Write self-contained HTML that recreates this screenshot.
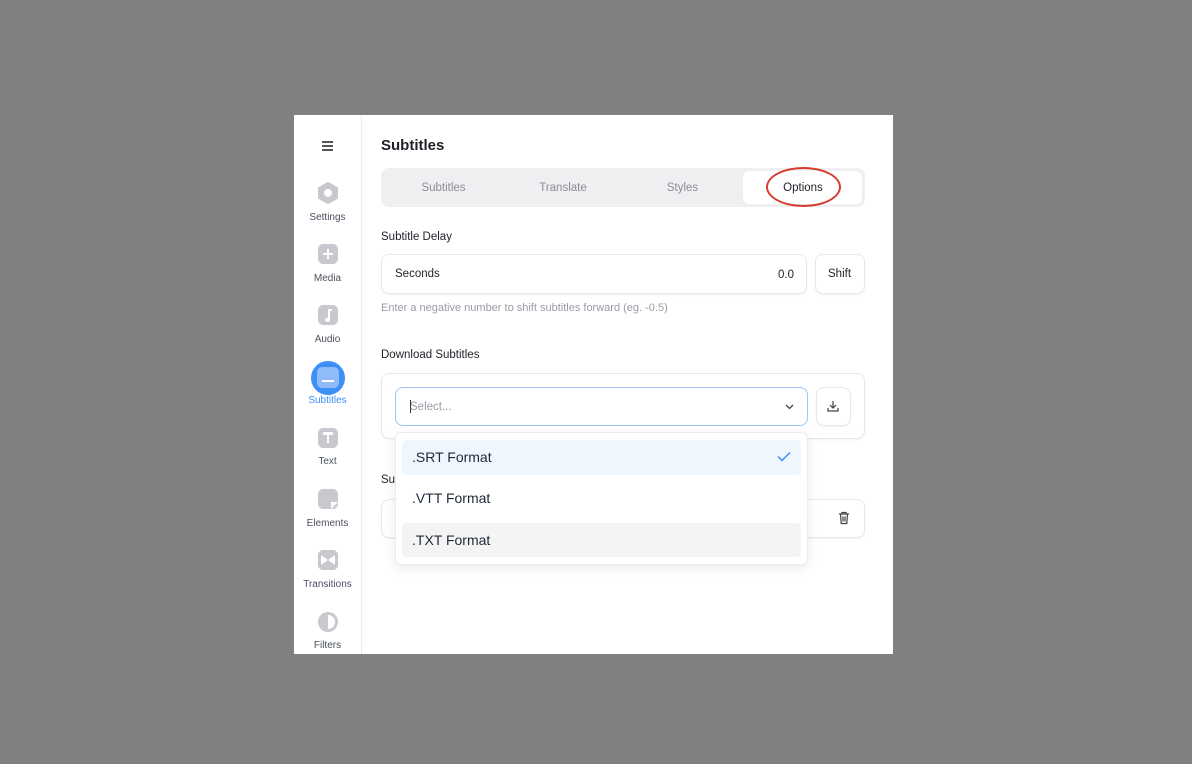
<!DOCTYPE html>
<html><head><meta charset="utf-8"><style>
*{box-sizing:border-box;margin:0;padding:0}
body{width:1192px;height:764px;background:#808080;font-family:"Liberation Sans",sans-serif;position:relative;overflow:hidden}
.panel{position:absolute;left:294px;top:115px;width:599px;height:539px;background:#fff;overflow:hidden}
.side{position:absolute;left:0;top:0;width:68px;height:539px;border-right:1px solid #ececee}
.it{position:absolute;left:0;width:67px;text-align:center;font-size:10px;color:#4b5060}
.ic{position:absolute;left:24px;width:20px;height:20px;border-radius:5px;background:#c8c9ce}
.a{position:absolute}
.lbl{font-size:11.5px;color:#1f2128}
.box{border:1px solid #e6e7ea;border-radius:8px;background:#fff;box-shadow:0 1px 2px rgba(0,0,0,.05)}
</style></head><body>
<div class="panel">
<div class="side">
 <div class="a" style="left:28px;top:26px;width:11px;height:1.5px;background:#555;box-shadow:0 4px 0 #555,0 8px 0 #555"></div>
 <svg class="a" style="left:23px;top:67px" width="22" height="22" viewBox="0 0 22 22"><polygon points="11,1 20,6 20,16 11,21 2,16 2,6" fill="#c8c9ce" stroke="#c8c9ce" stroke-linejoin="round" stroke-width="2"/><circle cx="11" cy="11" r="4" fill="#fff"/></svg>
 <div class="it" style="top:97px">Settings</div>
 <div class="ic" style="top:129px"></div><div class="a" style="left:29px;top:138px;width:10px;height:2px;background:#fff"></div><div class="a" style="left:33px;top:134px;width:2px;height:10px;background:#fff"></div>
 <div class="it" style="top:158px">Media</div>
 <div class="ic" style="top:190px"></div><div class="a" style="left:31px;top:203px;width:5px;height:4px;border-radius:50%;background:#fff"></div><div class="a" style="left:34px;top:194px;width:2px;height:11px;background:#fff"></div><div class="a" style="left:34px;top:194px;width:4px;height:2px;background:#fff"></div>
 <div class="it" style="top:219px">Audio</div>
 <div class="a" style="left:17px;top:246px;width:34px;height:34px;border-radius:50%;background:#3b8ff5"></div><div class="a" style="left:23px;top:252px;width:22px;height:21px;border-radius:5px;background:#8fbcf9"></div><div class="a" style="left:28px;top:265px;width:12px;height:2px;background:#fff"></div>
 <div class="it" style="top:280px;color:#3b8ff5">Subtitles</div>
 <div class="ic" style="top:313px"></div><div class="a" style="left:29px;top:317px;width:10px;height:2.5px;background:#fff"></div><div class="a" style="left:32.7px;top:317px;width:2.6px;height:11px;background:#fff"></div>
 <div class="it" style="top:341px">Text</div>
 <div class="ic" style="top:374px"></div><div class="a" style="left:37px;top:387px;width:7px;height:7px;background:#fff;clip-path:polygon(100% 0,0 100%,100% 100%);transform:rotate(180deg)"></div>
 <div class="it" style="top:403px">Elements</div>
 <div class="ic" style="top:435px"></div><svg class="a" style="left:27px;top:440px" width="14" height="10"><polygon points="0,0 7,5 0,10" fill="#fff"/><polygon points="14,0 7,5 14,10" fill="#fff"/></svg>
 <div class="it" style="top:464px">Transitions</div>
 <svg class="a" style="left:23px;top:496px" width="22" height="22"><circle cx="11" cy="11" r="10" fill="#c8c9ce"/><path d="M11 4a7 7 0 0 1 0 14z" fill="#fff"/></svg>
 <div class="it" style="top:525px">Filters</div>
</div>
<div class="a" style="left:87px;top:22px;font-size:15px;font-weight:bold;color:#1f2128">Subtitles</div>
<div class="a" style="left:87px;top:53px;width:484px;height:39px;background:#efeff1;border-radius:8px"></div>
<div class="a" style="left:449px;top:56px;width:119px;height:33px;background:#fff;border-radius:6px"></div>
<div class="a" style="left:87px;top:67px;width:484px;font-size:11.5px;color:#8a8d98;display:flex">
 <span style="width:125px;text-align:center">Subtitles</span><span style="width:114px;text-align:center">Translate</span><span style="width:125px;text-align:center">Styles</span><span style="width:116px;text-align:center;color:#1f2128">Options</span></div>
<div class="a" style="left:472px;top:52px;width:75px;height:40px;border:2px solid #d83a2e;border-radius:50%"></div>
<div class="a lbl" style="left:87px;top:116px">Subtitle Delay</div>
<div class="a box" style="left:87px;top:139px;width:426px;height:40px"></div>
<div class="a lbl" style="left:101px;top:153px">Seconds</div>
<div class="a lbl" style="left:484px;top:154px">0.0</div>
<div class="a box" style="left:521px;top:139px;width:50px;height:40px"></div>
<div class="a lbl" style="left:534px;top:153px">Shift</div>
<div class="a" style="left:87px;top:187px;font-size:11px;color:#9a9ca5">Enter a negative number to shift subtitles forward (eg. -0.5)</div>
<div class="a lbl" style="left:87px;top:234px">Download Subtitles</div>
<div class="a box" style="left:87px;top:258px;width:484px;height:66px"></div>
<div class="a" style="left:101px;top:272px;width:413px;height:39px;border:1px solid #9cc6f5;border-radius:8px;background:#fff"></div>
<div class="a" style="left:116px;top:285px;width:1px;height:13px;background:#333"></div>
<div class="a" style="left:116px;top:286px;font-size:11.5px;color:#9a9ca5">Select...</div>
<svg class="a" style="left:491px;top:288px" width="9" height="7"><path d="M1 2l3.5 3.5L8 2" fill="none" stroke="#444" stroke-width="1.3"/></svg>
<div class="a box" style="left:522px;top:272px;width:35px;height:39px"></div>
<svg class="a" style="left:533px;top:285px" width="12" height="12"><path d="M6 1v7M3 5l3 3 3-3M1 8v3h10V8" fill="none" stroke="#444" stroke-width="1.2"/></svg>
<div class="a lbl" style="left:87px;top:359px">Su</div>
<div class="a box" style="left:87px;top:384px;width:484px;height:39px"></div>
<svg class="a" style="left:544px;top:396px" width="12" height="14"><path d="M1 3h10M4 3V1.5h4V3M2.5 3l.7 9.5h5.6L9.5 3M5 5.5v5M7 5.5v5" fill="none" stroke="#444" stroke-width="1.2"/></svg>
<div class="a" style="left:101px;top:317px;width:413px;height:133px;background:#fff;border:1px solid #ececee;border-radius:6px;box-shadow:0 4px 12px rgba(0,0,0,.08)"></div>
<div class="a" style="left:108px;top:325px;width:399px;height:35px;background:#eff6fe;border-radius:5px"></div>
<div class="a" style="left:108px;top:408px;width:399px;height:34px;background:#f4f4f5;border-radius:5px"></div>
<div class="a" style="left:118px;top:334px;font-size:14px;color:#1f2937">.SRT Format</div>
<div class="a" style="left:118px;top:375px;font-size:14px;color:#1f2937">.VTT Format</div>
<div class="a" style="left:118px;top:417px;font-size:14px;color:#1f2937">.TXT Format</div>
<svg class="a" style="left:483px;top:336px" width="14" height="11"><path d="M1 5.5l4 4L13 1.5" fill="none" stroke="#3b8ff5" stroke-width="1.5"/></svg>
</div>
</body></html>
